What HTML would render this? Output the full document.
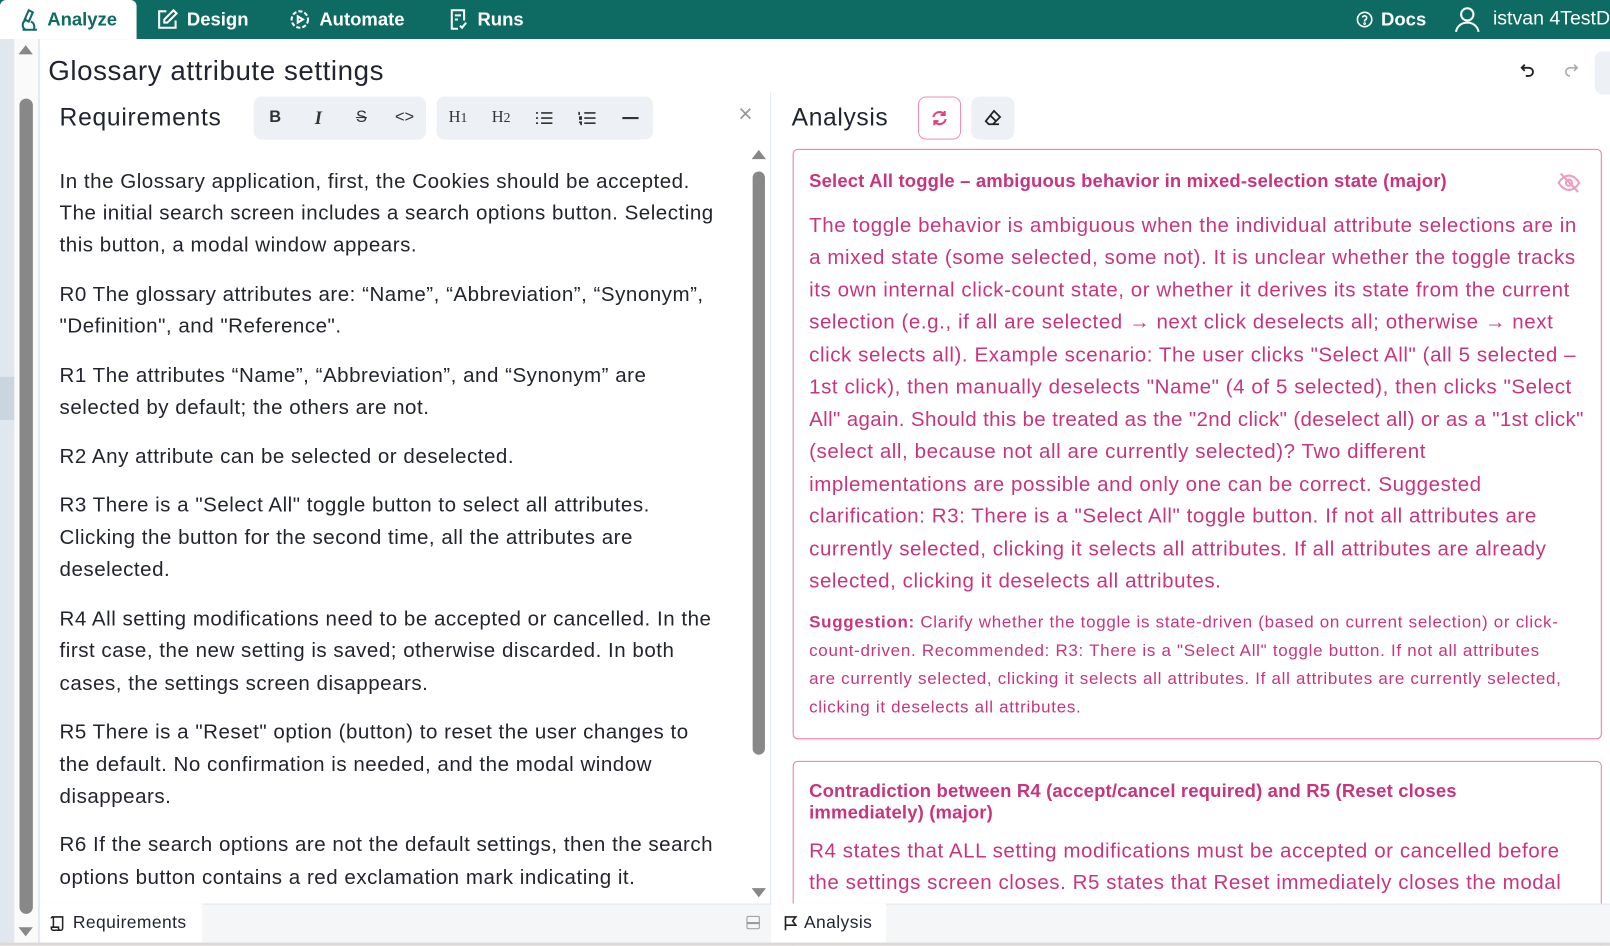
<!DOCTYPE html>
<html><head><meta charset="utf-8">
<style>
*{box-sizing:border-box;margin:0;padding:0}
html,body{width:1610px;height:945px;overflow:hidden;background:#fff}
body{font-family:"Liberation Sans",sans-serif;color:#1f2430}
#w{position:absolute;left:0;top:0;width:1568px;height:921px;transform:scale(1.02679);transform-origin:0 0;overflow:hidden}
.abs{position:absolute}
.top{left:0;top:0;width:1568px;height:38px;background:#0e6b63}
.tab{top:0;height:38px;display:flex;align-items:center;gap:8px;color:#fff;font-size:18px;font-weight:bold;white-space:nowrap}
.ln{position:absolute;white-space:nowrap}
.lt{font-size:20px;letter-spacing:.5px;color:#22252c}
.pk{color:#c8357e}
.tb{background:#edf1f6;border-radius:8px;height:42px;top:94px}
.ti{position:absolute;top:0;height:42px;width:42px;display:flex;align-items:center;justify-content:center;font-size:16px;color:#333;font-weight:bold}
</style></head><body><div id="w">
<div class="abs top"></div>
<div class="abs" style="left:0;top:0;width:133px;height:38px;background:#fff;border-radius:6px 6px 0 0"></div>
<div class="abs tab" style="left:16px;color:#0e6b63">
<svg width="22" height="24" viewBox="0 0 22 24" fill="none" stroke="#0e6b63" stroke-width="2"><path d="M6 22h14M9 22c-4-2-4-8 1-10M12 3l4 2-4 9-4-2zM14 14c3 1 4 4 3 8"/></svg>Analyze</div>
<div class="abs tab" style="left:152px"><svg width="22" height="22" viewBox="0 0 22 22" fill="none" stroke="#fff" stroke-width="2"><path d="M10 3H3v16h16v-7M17 2l3 3-9 9H8v-3z"/></svg>Design</div>
<div class="abs tab" style="left:281px"><svg width="22" height="22" viewBox="0 0 22 22" fill="none" stroke="#fff" stroke-width="2"><circle cx="11" cy="11" r="8" stroke-dasharray="4 2"/><path d="M9 8l5 3-5 3z"/></svg>Automate</div>
<div class="abs tab" style="left:437px"><svg width="20" height="22" viewBox="0 0 20 22" fill="none" stroke="#fff" stroke-width="2"><path d="M9 20H3V2h12v10M6 7h6M6 11h3M11 17l2 2 4-5"/></svg>Runs</div>
<div class="abs tab" style="left:1321px;font-size:18px"><svg width="16" height="16" viewBox="0 0 16 16" fill="none" stroke="#fff" stroke-width="1.6"><circle cx="8" cy="8" r="7"/><path d="M6 6a2 2 0 1 1 3 2c-1 .5-1 1-1 2"/><circle cx="8" cy="12" r=".5"/></svg>Docs</div>
<div class="abs tab" style="left:1416px;font-weight:normal;font-size:19px;gap:12px"><svg width="26" height="26" viewBox="0 0 26 26" fill="none" stroke="#fff" stroke-width="2"><circle cx="13" cy="8" r="6"/><path d="M2 25c1-6 6-9 11-9s10 3 11 9"/></svg>istvan 4TestD</div>

<div class="abs" style="left:0;top:38px;width:14px;height:880px;background:#e1e7ef"></div>
<div class="abs" style="left:0;top:367px;width:14px;height:42px;background:#cbd5df"></div>
<div class="abs" style="left:14px;top:38px;width:23px;height:880px;background:#fafafa"></div>
<div class="abs" style="left:37px;top:38px;width:2px;height:880px;background:#e3eaf3"></div>
<div class="abs" style="left:19px;top:96px;width:13px;height:794px;background:#888;border-radius:7px"></div>
<div class="abs" style="left:18px;top:44px;width:0;height:0;border-left:7px solid transparent;border-right:7px solid transparent;border-bottom:9px solid #888"></div>
<div class="abs" style="left:18px;top:903px;width:0;height:0;border-left:7px solid transparent;border-right:7px solid transparent;border-top:9px solid #888"></div>

<div class="ln" style="left:47px;top:54px;font-size:27px;letter-spacing:.55px;color:#1f2430">Glossary attribute settings</div>
<svg class="abs" style="left:1480px;top:61px" width="16" height="16" viewBox="0 0 16 16" fill="none" stroke="#222" stroke-width="1.8"><path d="M5 2L2 5l3 3M2 5h7a4 4 0 0 1 0 8H6"/></svg>
<svg class="abs" style="left:1522px;top:61px" width="16" height="16" viewBox="0 0 16 16" fill="none" stroke="#aaa" stroke-width="1.6"><path d="M11 2l3 3-3 3M14 5H7a4 4 0 0 0 0 8"/></svg>
<div class="abs" style="left:1553px;top:50px;width:57px;height:42px;background:#edf1f6;border-radius:8px"></div>

<div class="ln" style="left:58px;top:101px;font-size:24px;letter-spacing:.7px">Requirements</div>
<div class="abs tb" style="left:247px;width:168px">
<div class="ti" style="left:0">B</div><div class="ti" style="left:42px;font-style:italic;font-family:'Liberation Serif',serif;font-size:18px">I</div><div class="ti" style="left:84px;text-decoration:line-through;font-weight:normal">S</div><div class="ti" style="left:126px;font-weight:normal">&lt;&gt;</div></div>
<div class="abs tb" style="left:425px;width:211px">
<div class="ti" style="left:0;font-family:'Liberation Serif',serif;font-weight:normal">H<small>1</small></div><div class="ti" style="left:42px;font-family:'Liberation Serif',serif;font-weight:normal">H<small>2</small></div>
<div class="ti" style="left:84px"><svg width="18" height="14" viewBox="0 0 18 14" stroke="#333" stroke-width="1.6"><path d="M6 2h11M6 7h11M6 12h11M1 2h2M1 7h2M1 12h2"/></svg></div>
<div class="ti" style="left:126px"><svg width="18" height="14" viewBox="0 0 18 14" stroke="#333" stroke-width="1.6"><path d="M6 2h11M6 7h11M6 12h11M1 1v3M1 6h2v2H1M1 11h2v3"/></svg></div>
<div class="ti" style="left:168px"><svg width="16" height="4" stroke="#333" stroke-width="2"><path d="M0 2h16"/></svg></div></div>
<div class="ln" style="left:719px;top:98px;font-size:24px;color:#999">×</div>

<div class="lt">
<div class="ln" style="left:58px;top:166px">In the Glossary application, first, the Cookies should be accepted.</div>
<div class="ln" style="left:58px;top:197px">The initial search screen includes a search options button. Selecting</div>
<div class="ln" style="left:58px;top:228px">this button, a modal window appears.</div>
<div class="ln" style="left:58px;top:276px">R0 The glossary attributes are: “Name”, “Abbreviation”, “Synonym”,</div>
<div class="ln" style="left:58px;top:307px">"Definition", and "Reference".</div>
<div class="ln" style="left:58px;top:355px">R1 The attributes “Name”, “Abbreviation”, and “Synonym” are</div>
<div class="ln" style="left:58px;top:386px">selected by default; the others are not.</div>
<div class="ln" style="left:58px;top:434px">R2 Any attribute can be selected or deselected.</div>
<div class="ln" style="left:58px;top:481px">R3 There is a "Select All" toggle button to select all attributes.</div>
<div class="ln" style="left:58px;top:513px">Clicking the button for the second time, all the attributes are</div>
<div class="ln" style="left:58px;top:544px">deselected.</div>
<div class="ln" style="left:58px;top:592px">R4 All setting modifications need to be accepted or cancelled. In the</div>
<div class="ln" style="left:58px;top:623px">first case, the new setting is saved; otherwise discarded. In both</div>
<div class="ln" style="left:58px;top:655px">cases, the settings screen disappears.</div>
<div class="ln" style="left:58px;top:702px">R5 There is a "Reset" option (button) to reset the user changes to</div>
<div class="ln" style="left:58px;top:734px">the default. No confirmation is needed, and the modal window</div>
<div class="ln" style="left:58px;top:765px">disappears.</div>
<div class="ln" style="left:58px;top:812px">R6 If the search options are not the default settings, then the search</div>
<div class="ln" style="left:58px;top:844px">options button contains a red exclamation mark indicating it.</div>
</div>
<div class="abs" style="left:732px;top:146px;width:0;height:0;border-left:7px solid transparent;border-right:7px solid transparent;border-bottom:9px solid #888"></div>
<div class="abs" style="left:733px;top:167px;width:12px;height:568px;background:#888;border-radius:6px"></div>
<div class="abs" style="left:732px;top:865px;width:0;height:0;border-left:7px solid transparent;border-right:7px solid transparent;border-top:9px solid #888"></div>
<div class="abs" style="left:750px;top:90px;width:1px;height:790px;background:#dfe6ee"></div>

<div class="ln" style="left:771px;top:101px;font-size:24px;letter-spacing:.6px">Analysis</div>
<div class="abs" style="left:894px;top:94px;width:42px;height:42px;border:1px solid #f08bb4;border-radius:8px;display:flex;align-items:center;justify-content:center">
<svg width="18" height="16" viewBox="0 0 18 16" fill="none" stroke="#e0407f" stroke-width="2"><path d="M3 7a6 6 0 0 1 11-2M15 9a6 6 0 0 1-11 2M14 1v4h-4M4 15v-4h4"/></svg></div>
<div class="abs" style="left:946px;top:94px;width:42px;height:42px;background:#edf1f6;border-radius:8px;display:flex;align-items:center;justify-content:center">
<svg width="18" height="18" viewBox="0 0 18 18" fill="none" stroke="#222" stroke-width="1.7"><path d="M10 2l6 6-7 7H5l-3-3zM6 6l6 6M5 15h10"/></svg></div>

<div class="abs" style="left:772px;top:145px;width:788px;height:575px;border:1px solid #ee7aa8;border-radius:5px;box-shadow:0 1px 2px rgba(0,0,0,.08)"></div>
<div class="ln pk" style="left:788px;top:166px;font-size:18px;letter-spacing:.15px;font-weight:bold">Select All toggle – ambiguous behavior in mixed-selection state (major)</div>
<svg class="abs" style="left:1516px;top:167px" width="24" height="22" viewBox="0 0 24 22" fill="none" stroke="#ee9cc0" stroke-width="2"><path d="M2 11s4-7 10-7 10 7 10 7-4 7-10 7S2 11 2 11z"/><circle cx="12" cy="11" r="3"/><path d="M4 2l17 18"/></svg>
<div class="pk" style="font-size:20px;letter-spacing:.55px">
<div class="ln" style="left:788px;top:209px">The toggle behavior is ambiguous when the individual attribute selections are in</div>
<div class="ln" style="left:788px;top:240px">a mixed state (some selected, some not). It is unclear whether the toggle tracks</div>
<div class="ln" style="left:788px;top:272px">its own internal click-count state, or whether it derives its state from the current</div>
<div class="ln" style="left:788px;top:303px">selection (e.g., if all are selected → next click deselects all; otherwise → next</div>
<div class="ln" style="left:788px;top:335px">click selects all). Example scenario: The user clicks "Select All" (all 5 selected –</div>
<div class="ln" style="left:788px;top:366px">1st click), then manually deselects "Name" (4 of 5 selected), then clicks "Select</div>
<div class="ln" style="left:788px;top:398px;letter-spacing:.35px">All" again. Should this be treated as the "2nd click" (deselect all) or as a "1st click"</div>
<div class="ln" style="left:788px;top:429px">(select all, because not all are currently selected)? Two different</div>
<div class="ln" style="left:788px;top:461px">implementations are possible and only one can be correct. Suggested</div>
<div class="ln" style="left:788px;top:492px">clarification: R3: There is a "Select All" toggle button. If not all attributes are</div>
<div class="ln" style="left:788px;top:524px">currently selected, clicking it selects all attributes. If all attributes are already</div>
<div class="ln" style="left:788px;top:555px">selected, clicking it deselects all attributes.</div>
</div>
<div class="pk" style="font-size:16.5px;letter-spacing:.7px">
<div class="ln" style="left:788px;top:597px"><b>Suggestion:</b> Clarify whether the toggle is state-driven (based on current selection) or click-</div>
<div class="ln" style="left:788px;top:625px">count-driven. Recommended: R3: There is a "Select All" toggle button. If not all attributes</div>
<div class="ln" style="left:788px;top:652px">are currently selected, clicking it selects all attributes. If all attributes are currently selected,</div>
<div class="ln" style="left:788px;top:680px">clicking it deselects all attributes.</div>
</div>

<div class="abs" style="left:772px;top:741px;width:788px;height:200px;border:1px solid #ee7aa8;border-radius:5px"></div>
<div class="ln pk" style="left:788px;top:760px;font-size:18px;letter-spacing:.15px;font-weight:bold;line-height:21px">Contradiction between R4 (accept/cancel required) and R5 (Reset closes<br>immediately) (major)</div>
<div class="pk" style="font-size:20px;letter-spacing:.55px">
<div class="ln" style="left:788px;top:818px">R4 states that ALL setting modifications must be accepted or cancelled before</div>
<div class="ln" style="left:788px;top:849px">the settings screen closes. R5 states that Reset immediately closes the modal</div>
</div>

<div class="abs" style="left:39px;top:880px;width:1571px;height:38px;background:#f4f6f8;border-top:1px solid #e3e7ec"></div>
<div class="abs" style="left:39px;top:880px;width:158px;height:38px;background:#fff;display:flex;align-items:center;gap:6px;padding-left:10px;font-size:17px;letter-spacing:.4px">
<svg width="16" height="16" viewBox="0 0 16 16" fill="none" stroke="#222" stroke-width="1.5"><path d="M3 2h9v11a2 2 0 0 1-4 0v-1H1v1a2 2 0 0 0 2 2h7M3 2v10M3 2a1.5 1.5 0 0 0-2 1.5"/></svg>Requirements</div>
<div class="abs" style="left:727px;top:892px;width:13px;height:13px;border:1.5px solid #999;border-radius:2px"></div>
<div class="abs" style="left:727px;top:898px;width:13px;height:1.5px;background:#999"></div>
<div class="abs" style="left:751px;top:880px;width:112px;height:38px;background:#fff;display:flex;align-items:center;gap:6px;padding-left:12px;font-size:17px;letter-spacing:.4px">
<svg width="14" height="16" viewBox="0 0 14 16" fill="none" stroke="#222" stroke-width="1.6"><path d="M2 15V2h10l-3 4 3 4H2"/></svg>Analysis</div>
<div class="abs" style="left:0;top:918px;width:1568px;height:10px;background:#dcd8d3"></div>
</div></body></html>
